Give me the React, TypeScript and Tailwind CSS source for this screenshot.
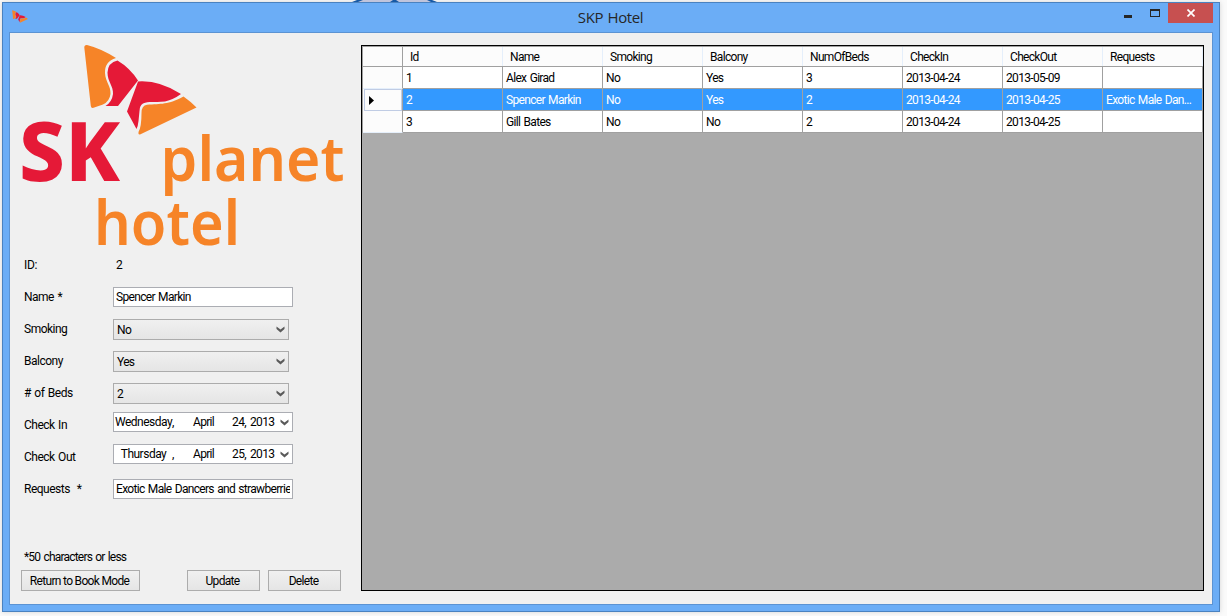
import React from "react";

const RED = "#e51937";
const ORANGE = "#f68428";

function Wings() {
  return (
    <g>
      <path fill={ORANGE} d="M84.3 47.5Q84.2 44.8 87 45Q101 48.5 116 58Q104.500 61.500 105 73C105.500 82 111 86 110.500 94Q109.500 101.500 103 104.500L93.500 107.800Q91.200 108.500 90.800 106Z" />
      <path fill={RED} d="M117.500 60.500Q130 68 138 80.500L118 106H105.500Q112 102 113 94C113.500 86 107.500 82 107.500 72.500Q108 62.500 117.500 60.500Z" />
      <path fill={RED} d="M138 81.500Q159 80 181 94Q173.500 99.500 165 101.500C153 102.800 149 101 143 103.500Q139.500 105.500 139.500 111L138.500 121Q138 126 136.500 129L127 111.500Z" />
      <path fill={ORANGE} d="M183.500 96.500Q190 101 196.500 107.500L140 134.500Q138 135 138.500 132Q141.500 127 141.500 113Q141.500 105.500 147 104.800C161 103.500 168 105 183.500 96.500Z" />
    </g>
  );
}

function Logo() {
  return (
    <svg className="block h-[215px] w-[351px] shrink-0 overflow-visible" viewBox="10 33 351 215">
      <Wings />
      <g fontFamily="Noto Sans, sans-serif" letterSpacing="0" wordSpacing="0">
        <text x="19" y="181" fontSize="82" fontWeight="800" fill={RED} textLength="101" lengthAdjust="spacingAndGlyphs">SK</text>
        <text x="160.500" y="180.500" fontSize="61" fontWeight="600" fill={ORANGE} textLength="184" lengthAdjust="spacingAndGlyphs">planet</text>
        <text x="94" y="245" fontSize="61" fontWeight="600" fill={ORANGE} textLength="146" lengthAdjust="spacingAndGlyphs">hotel</text>
      </g>
    </svg>
  );
}

function Chevron() {
  return (
    <svg className="h-[7px] w-[9px] shrink-0" viewBox="0 0 9 7">
      <path d="M0.500 0.500L4.500 3.500L8.500 0.500V3L4.500 6.500L0.500 3Z" fill="#5a5a5a" />
    </svg>
  );
}

function Field({ label, children }: { label: string; children: React.ReactNode }) {
  return (
    <div className="flex h-8 items-start">
      <div className="w-[89px] pt-[2px] tracking-[-0.5px] whitespace-pre">{label}</div>
      {children}
    </div>
  );
}

function TextBox({ children }: { children: React.ReactNode }) {
  return (
    <div className="h-5 w-[180px] border border-[#abadb3] bg-white px-[2px]">
      <div className="overflow-hidden leading-[18px] whitespace-nowrap">{children}</div>
    </div>
  );
}

function Select({ value }: { value: string }) {
  return (
    <div className="flex h-[21px] w-[176px] items-center justify-between border border-[#acacac] bg-linear-to-b from-[#f0f0f0] to-[#e5e5e5] pr-[3px] pl-[3px]">
      <span className="pt-px">{value}</span>
      <Chevron />
    </div>
  );
}

function DateBox({ day, comma, date }: { day: string; comma: string; date: string }) {
  return (
    <div className="-mt-[3px] flex h-5 w-[180px] items-center border border-[#abadb3] bg-white pr-[3px]">
      <span className="w-[58px] pl-px text-center tracking-[-0.5px]">{day}</span>
      <span className="w-[21px]">{comma}</span>
      <span className="w-[39px] tracking-[-0.7px]">April</span>
      <span className="flex-1 tracking-[-0.6px] [word-spacing:1.500px]">{date}</span>
      <Chevron />
    </div>
  );
}

function Button({ className, children }: { className: string; children: React.ReactNode }) {
  return (
    <button className={`h-[21px] border border-[#acacac] bg-linear-to-b from-[#f0f0f0] to-[#e5e5e5] pt-px pr-[2px] text-center leading-[18px] ${className}`}>
      {children}
    </button>
  );
}

const columns = ["Id", "Name", "Smoking", "Balcony", "NumOfBeds", "CheckIn", "CheckOut", "Requests"];
const rows = [
  ["1", "Alex Girad", "No", "Yes", "3", "2013-04-24", "2013-05-09", ""],
  ["2", "Spencer Markin", "No", "Yes", "2", "2013-04-24", "2013-04-25", "Exotic Male Dan..."],
  ["3", "Gill Bates", "No", "No", "2", "2013-04-24", "2013-04-25", ""],
];

function Grid() {
  return (
    <div className="mt-3 h-[546px] w-[843px] shrink-0 border border-black bg-[#ababab]">
      <div className="border-l border-[#a0a0a0]">
        <div className="flex h-[21px] border-y border-[#a0a0a0] bg-[#fcfcfc]">
          <div className="w-10 border-r border-[#a0a0a0]" />
          {columns.map((c) => (
            <div key={c} className="w-[100px] border-r border-[#e5effb] pl-[7px] leading-[20px]">{c}</div>
          ))}
        </div>
        {rows.map((row, i) => (
          <div key={row[0]} className="flex h-[22px]">
            {i === 1 ? (
              <div className="flex w-10 items-center border-r border-[#a0a0a0] bg-[#fcfcfc]">
                <div className="-mt-px ml-px flex h-[22px] w-[38px] items-center border border-[#c0cce4] pt-px pl-[4px]">
                  <svg className="h-[9px] w-[5px]" viewBox="0 0 5 9"><path d="M0 0L5 4.500L0 9Z" /></svg>
                </div>
              </div>
            ) : (
              <div className="w-10 border-r border-b border-r-[#a0a0a0] border-b-[#e5effb] bg-[#fcfcfc]" />
            )}
            {row.map((cell, j) => (
              <div
                key={j}
                className={`w-[100px] overflow-hidden border-r border-b border-[#a0a0a0] pl-[3px] leading-[22px] whitespace-nowrap ${i === 1 ? "bg-[#3399ff] text-white" : "bg-white"}`}
              >
                {cell}
              </div>
            ))}
          </div>
        ))}
      </div>
    </div>
  );
}

export default function App() {
  return (
    <div className="relative h-[616px] w-[1227px] overflow-hidden bg-[#fafafa] pt-[2px] pl-[2px] font-['Roboto',sans-serif] text-[12px] leading-[16px] tracking-[-0.68px] text-black [word-spacing:1px]">
      <svg className="absolute top-0 left-[350px] h-[2px] w-[90px]" viewBox="0 0 90 2">
        <path d="M4 2L9 0H80L86 2Z" fill="#c0c4dc" />
        <path d="M2 2L7 0H13L8 2ZM40 2L43 0H46L49 2ZM77 0H82L87 2H81Z" fill="#1659a5" />
      </svg>
      <div className="h-[610px] w-[1218px] border border-[#4a82c0] bg-[#6badf6] shadow-[0_0_5px_rgba(0,0,0,0.15)]">
        <header className="flex h-[29px] items-start">
          <svg className="mt-[7px] ml-[9px] h-[13px] w-[16px]" viewBox="83 44 114 92" preserveAspectRatio="none"><Wings /></svg>
          <div className="w-[1096px] pt-[3px] pl-[69px] text-center font-['Open_Sans',sans-serif] text-[15px] leading-[22px] tracking-[-0.4px] text-[#262626]">
            <span>SKP Hotel</span>
          </div>
          <div className="mt-[12px] h-[3px] w-[8px] bg-[#262626]" />
          <div className="mt-[6px] ml-[18px] h-[8px] w-[10px] border border-t-2 border-[#262626]" />
          <div className="ml-2 flex h-5 w-[45px] items-center justify-center bg-[#c75050]">
            <svg className="h-[8px] w-[8px]" viewBox="0 0 8 8"><path d="M0.500 0.500L7.500 7.500M7.500 0.500L0.500 7.500" stroke="#fff" strokeWidth="1.700" /></svg>
          </div>
        </header>
        <main className="ml-[6px] flex h-[573px] w-[1204px] border border-[#5b93d3] bg-[#f0f0f0]">
          <section className="flex w-[351px] flex-col">
            <Logo />
            <div className="pt-[9px] pl-[14px]">
              <div className="flex h-[30px]">
                <div className="w-[92px] tracking-[-0.3px]">ID:</div>
                <div>2</div>
              </div>
              <Field label="Name *"><TextBox>Spencer Markin</TextBox></Field>
              <Field label="Smoking"><Select value="No" /></Field>
              <Field label="Balcony"><Select value="Yes" /></Field>
              <Field label="# of Beds"><Select value="2" /></Field>
              <Field label="Check In"><DateBox day="Wednesday" comma="," date="24, 2013" /></Field>
              <Field label="Check Out"><DateBox day="Thursday" comma="," date="25, 2013" /></Field>
              <Field label="Requests  *"><TextBox>Exotic Male Dancers and strawberries</TextBox></Field>
            </div>
            <div className="mt-[38px] pl-[14px] tracking-[-0.8px]">*50 characters or less</div>
            <div className="mt-[5px] flex pl-[11px]">
              <Button className="w-[119px]">Return to Book Mode</Button>
              <Button className="ml-[47px] w-[73px]">Update</Button>
              <Button className="ml-2 w-[73px]">Delete</Button>
            </div>
          </section>
          <Grid />
        </main>
      </div>
    </div>
  );
}
